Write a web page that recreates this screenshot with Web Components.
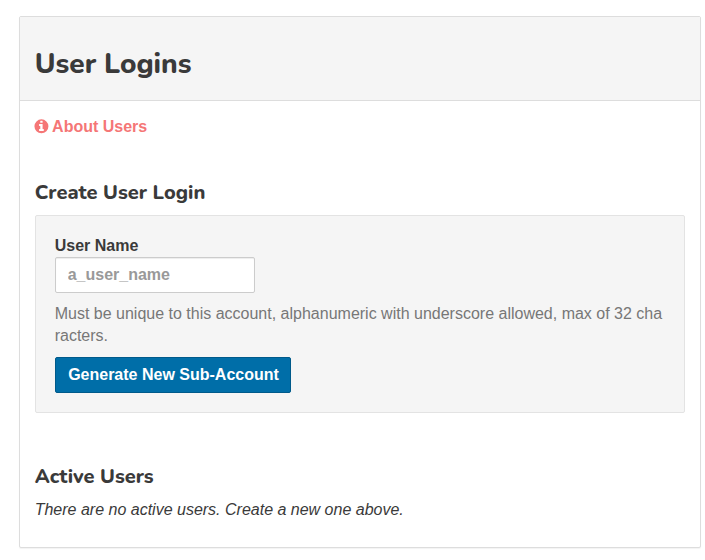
<!DOCTYPE html>
<html lang="en"><head><meta charset="utf-8"><title>User Logins</title>
<style>
html,body{margin:0;background:#fff}
body{padding:16px 4px 0 18.7px;font:16px/22px "Liberation Sans",Arial,sans-serif;color:#3a3a3a;height:560px;box-sizing:border-box;overflow:hidden}
</style></head><body>
<user-panel>
  <section-title slot="heading" size="large">User Logins</section-title>
  <info-link>About Users</info-link>
  <section-title class="create">Create User Login</section-title>
  <login-form></login-form>
  <section-title class="active">Active Users</section-title>
  <empty-note>There are no active users. Create a new one above.</empty-note>
</user-panel>
<script>
const define = (name, html) => customElements.define(name, class extends HTMLElement {
  constructor() {
    super();
    this.attachShadow({ mode: 'open' }).innerHTML = html;
  }
});
define('user-panel', `<style>
:host{display:block;box-sizing:border-box;width:682px;height:532px;border:1px solid #ddd;border-radius:2px;background:#fff;box-shadow:0 1px 1px rgba(0,0,0,.05)}
header{box-sizing:border-box;height:84px;padding:30px 15px 0;background:#f5f5f5;border-bottom:1px solid #ddd}
main{padding:15px}
::slotted(.create){margin-top:43px}
::slotted(.active){margin-top:52px}
</style><header><slot name="heading"></slot></header><main><slot></slot></main>`);
define('section-title', `<style>
:host{display:block}
h2{margin:0;font:800 20px/24px Nunito,"Open Sans","Noto Sans",sans-serif}
:host([size=large]) h2{font-size:28px;line-height:34px}
</style><h2><slot></slot></h2>`);
define('info-link', `<style>
:host{display:block;height:22px}
a{display:flex;align-items:center;gap:3.4px;color:#f57676;font-weight:700;text-decoration:none}
svg{width:14px;height:14px;overflow:visible}
</style><a href="#"><svg viewBox="0 0 1536 1536"><path transform="translate(-62 -70)" fill="currentColor" fill-rule="evenodd" d="M768 0a768 768 0 1 1 0 1536A768 768 0 0 1 768 0ZM1024 1248v-160q0-14-9-23t-23-9h-96V544q0-14-9-23t-23-9H544q-14 0-23 9t-9 23v160q0 14 9 23t23 9h96v320h-96q-14 0-23 9t-9 23v160q0 14 9 23t23 9h448q14 0 23-9t9-23ZM896 352V192q0-14-9-23t-23-9H672q-14 0-23 9t-9 23v160q0 14 9 23t23 9h192q14 0 23-9t9-23Z"/></svg><span><slot></slot></span></a>`);
define('login-form', `<style>
:host{display:block;box-sizing:border-box;width:650px;height:198px;margin-top:10px;padding:19px;background:#f5f5f5;border:1px solid #e3e3e3;border-radius:2px}
label{display:block;font-weight:700}
input{display:block;box-sizing:border-box;width:200px;height:36px;padding:6px 12px;border:1px solid #ccc;border-radius:2px;background:#fff;box-shadow:inset 0 1px 1px rgba(0,0,0,.075);font:700 16px/22px "Liberation Sans",Arial,sans-serif}
input::placeholder{color:#999;opacity:1}
p{margin:10px 0;color:#777;word-break:break-all}
button{display:block;box-sizing:border-box;width:236px;height:36px;padding:0 10px 0 11.6px;border:1px solid #005a8a;border-radius:2px;background:#006ea8;color:#fff;font:700 16px/22px "Liberation Sans",Arial,sans-serif;white-space:nowrap}
</style><label for="name">User Name</label><input id="name" placeholder="a_user_name"><p>Must be unique to this account, alphanumeric with underscore allowed, max of 32 characters.</p><button type="button">Generate New Sub-Account</button>`);
define('empty-note', `<style>
:host{display:block;margin-top:10px;font-style:italic}
</style><slot></slot>`);
</script></body></html>
